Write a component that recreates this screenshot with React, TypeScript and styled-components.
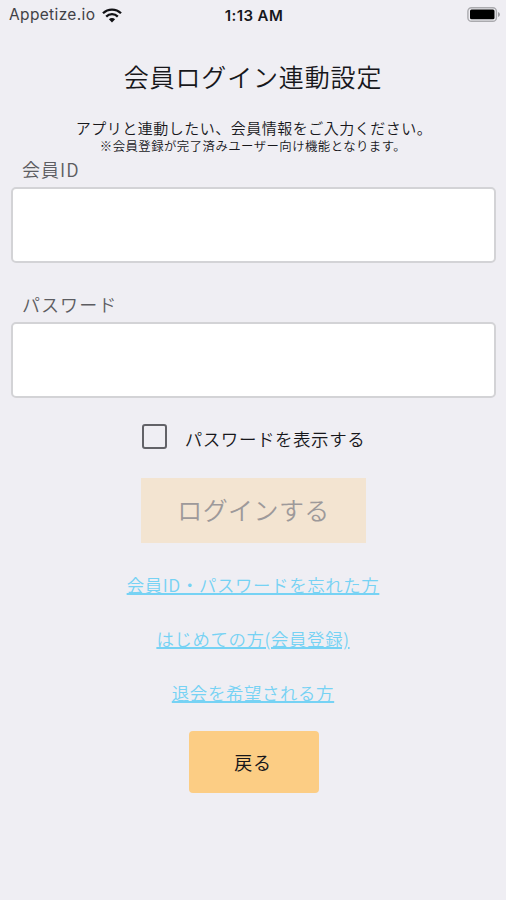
import React from "react";
import styled, { createGlobalStyle } from "styled-components";

const GlobalStyle = createGlobalStyle`
  *, *::before, *::after { box-sizing: border-box; }
  body {
    margin: 0;
    background: #efeef3;
    font-family: "Noto Sans CJK JP", sans-serif;
    font-weight: 350;
    color: #17171b;
  }
`;

const Screen = styled.main`
  display: flex;
  flex-direction: column;
  align-items: center;
  width: 100%;
  min-height: 900px;
`;

const StatusBar = styled.header`
  display: grid;
  grid-template-columns: 1fr auto 1fr;
  align-items: center;
  width: 100%;
  height: 28px;
  padding: 0 6px 0 9px;
  font-family: Inter, "Liberation Sans", sans-serif;
  font-size: 15px;
  line-height: 28px;
`;

const Carrier = styled.div`
  display: flex;
  align-items: center;
  gap: 7px;
  color: #414146;
  font-size: 15.5px;
  font-weight: 400;
  letter-spacing: 0.35px;
  line-height: 30px;
`;

const Clock = styled.time`
  font-weight: 600;
  font-size: 15px;
  letter-spacing: 0.4px;
  padding: 1px 1px 0 0;
`;

const BatteryIcon = styled.svg`
  justify-self: end;
`;

const Title = styled.h1`
  margin: 30px 0 0;
  font-size: 25px;
  font-weight: 350;
  letter-spacing: 0.85px;
  line-height: 36px;
`;

const Lead = styled.p`
  margin: 25px 0 0;
  padding-left: 2px;
  font-size: 15px;
  letter-spacing: 0.5px;
  line-height: 18px;
`;

const Note = styled.p`
  margin: 0;
  font-size: 12.4px;
  letter-spacing: 0.45px;
  line-height: 18px;
`;

const Form = styled.form`
  display: flex;
  flex-direction: column;
  align-items: center;
  width: 100%;
  padding: 0 10px 0 11px;
`;

const Field = styled.label`
  display: flex;
  flex-direction: column;
  width: 100%;
  height: 134.5px;
`;

const FieldName = styled.span`
  height: 32px;
  padding: 1px 0 0 11px;
  color: #5c5c61;
  font-size: 18px;
  letter-spacing: 1.05px;
  line-height: 26px;
`;

const Input = styled.input`
  width: 100%;
  height: 76px;
  padding: 0 12px;
  border: 2px solid #d3d3d6;
  border-radius: 5px;
  background: #fff;
  font-size: 20px;
`;

const CheckRow = styled.label`
  display: flex;
  align-items: center;
  gap: 18px;
  height: 28px;
  margin-top: 1px;
  font-size: 17.5px;
  letter-spacing: 0.55px;
  line-height: 28px;
`;

const Checkbox = styled.input`
  appearance: none;
  width: 25px;
  height: 25px;
  margin: 0 0 5px;
  border: 2px solid #626267;
  border-radius: 3px;
`;

const LoginButton = styled.button`
  width: 225px;
  height: 65px;
  margin-top: 25px;
  padding: 0 0 4px;
  border: 0;
  background: #f3e4d1;
  color: #9d999a;
  font: 350 25px "Noto Sans CJK JP", sans-serif;
  letter-spacing: 0.4px;
`;

const Links = styled.nav`
  display: flex;
  flex-direction: column;
  align-items: center;
  gap: 26px;
  margin-top: 28px;
`;

const TextLink = styled.a`
  color: #76d2f4;
  font-size: 17.4px;
  letter-spacing: 0.65px;
  line-height: 28px;
  text-decoration: underline;
  text-decoration-thickness: 1.5px;
  text-underline-offset: 1px;
`;

const BackButton = styled.button`
  width: 130px;
  height: 62px;
  margin: 24px 0 0 1px;
  padding: 0 1px 1px 0;
  border: 0;
  border-radius: 4px;
  background: #fccd84;
  color: #17171b;
  font: 400 18px "Noto Sans CJK JP", sans-serif;
  letter-spacing: 0.7px;
`;

function Wifi() {
  return (
    <svg width="20" height="15" viewBox="0 0 20 15" fill="none" stroke="#111114" strokeWidth="2.3">
      <path d="M1 5.3a12.8 12.8 0 0 1 18 0" />
      <path d="M4.2 8.6a8.2 8.2 0 0 1 11.6 0" />
      <path d="M10 14.4 6.9 11.3a4.4 4.4 0 0 1 6.2 0Z" fill="#111114" stroke="none" />
    </svg>
  );
}

function Battery() {
  return (
    <BatteryIcon width="33" height="16" viewBox="0 0 33 16">
      <rect x="0.9" y="0.7" width="28.5" height="13.6" rx="3.6" fill="none" stroke="#aaaaae" strokeWidth="1.4" />
      <rect x="3" y="2.6" width="24.5" height="9.6" rx="1.5" fill="#000" />
      <path d="M31 4.9q2 .9 2 2.6t-2 2.6Z" fill="#9d9da2" />
    </BatteryIcon>
  );
}

const links = ["会員ID・パスワードを忘れた方", "はじめての方(会員登録)", "退会を希望される方"];

export default function App() {
  return (
    <>
      <GlobalStyle />
      <Screen lang="ja">
        <StatusBar>
          <Carrier>
            Appetize.io
            <Wifi />
          </Carrier>
          <Clock>1:13 AM</Clock>
          <Battery />
        </StatusBar>
        <Title>会員ログイン連動設定</Title>
        <Lead>アプリと連動したい、会員情報をご入力ください。</Lead>
        <Note>※会員登録が完了済みユーザー向け機能となります。</Note>
        <Form>
          <Field>
            <FieldName>会員ID</FieldName>
            <Input type="text" />
          </Field>
          <Field>
            <FieldName>パスワード</FieldName>
            <Input type="password" />
          </Field>
          <CheckRow>
            <Checkbox type="checkbox" />
            パスワードを表示する
          </CheckRow>
          <LoginButton type="button" disabled>
            ログインする
          </LoginButton>
        </Form>
        <Links>
          {links.map((text) => (
            <TextLink key={text} href="#">
              {text}
            </TextLink>
          ))}
        </Links>
        <BackButton type="button">戻る</BackButton>
      </Screen>
    </>
  );
}
